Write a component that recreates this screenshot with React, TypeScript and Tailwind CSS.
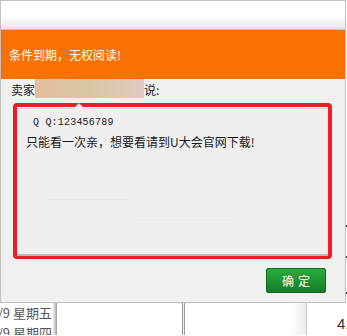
import React from "react";

const cjk = { fontFamily: '"SimSun","Noto Sans CJK SC","Liberation Sans",sans-serif' };

export default function App() {
  return (
    <div className="relative w-[347px] h-[336px] bg-white overflow-hidden" style={cjk}>
      {/* dialog */}
      <div className="w-[346px] border border-[#c0c0c0] bg-[#f0f0f0]">
        <div className="h-[29px] bg-gradient-to-b from-white via-white to-[#e6e6e6] border-b border-[#c4c4c4]" />
        <div className="h-[49px] bg-[#f97100] flex items-center pl-[8px] text-white text-[12px] leading-none">
          条件到期，无权阅读!
        </div>
        <div className="h-[223px] flex flex-col">
          <div className="flex items-end h-[19px] pl-[10px] text-[12px] leading-none text-[#222]">
            <span className="pb-[2px]">卖家</span>
            <span className="w-[109px] h-[19px] bg-gradient-to-r from-[#e6bc9c] via-[#d7c8a2] to-[#e2c8c2] blur-[0.5px]" />
            <span className="pb-[2px]">说:</span>
          </div>
          <div className="ml-[12px] mt-[5px] w-[319px] h-[156px] border-[4px] border-[#ee1c25] rounded-[4px] bg-[#efefef]">
            <div className="relative h-full border-t border-[#d6d6d6] border-b-2 border-b-[#b9b9b9] mt-[1px] pt-[7px] pl-[16px]">
              <svg className="absolute left-[56px] top-[-6px]" width="12" height="7" viewBox="0 0 12 7">
                <path d="M0 6.5 L6 0.5 L12 6.5" fill="#efefef" stroke="#d0d0d0" strokeWidth="1" />
              </svg>
              <div className="text-[10px] leading-[13px] text-[#222] tracking-[0.2px]" style={{ fontFamily: '"Liberation Mono","DejaVu Sans Mono",monospace' }}>
                Q Q:123456789
              </div>
              <div className="mt-[6px] -ml-[7px] text-[12px] leading-[14px] text-[#1a1a1a]">
                只能看一次亲，想要看请到U大会官网下载!
              </div>
              <div className="mt-[50px] ml-[10px] h-[1px] w-[90px] bg-[#eaeaea]" />
              <div className="mt-[20px] ml-[100px] h-[1px] w-[100px] bg-[#eaeaea]" />
            </div>
          </div>
          <div className="flex justify-end pr-[19px] mt-[9px]">
            <button className="w-[60px] h-[25px] rounded-[2px] border border-[#136d1f] bg-gradient-to-b from-[#27ad3c] via-[#1e9431] to-[#167c25] text-white text-[12px] leading-none tracking-[4px] pl-[4px]">
              确定
            </button>
          </div>
        </div>
      </div>
      {/* right tick marks */}
      <div className="absolute left-[346px] top-[225px] w-[1px] h-[2px] bg-[#333]" />
      <div className="absolute left-[346px] top-[256px] w-[1px] h-[2px] bg-[#333]" />
      <div className="absolute left-[346px] top-[292px] w-[1px] h-[2px] bg-[#333]" />
      {/* page behind */}
      <div className="flex h-[32px]">
        <div className="w-[53px] overflow-hidden flex flex-col items-end text-[13px] leading-[20px] text-[#555] pr-[1px]" style={{ fontFamily: '"Noto Sans CJK SC",sans-serif' }}>
          <div className="whitespace-nowrap">/9 星期五</div>
          <div className="whitespace-nowrap">/9 星期四</div>
        </div>
        <div className="w-[4px] bg-gradient-to-r from-[#eeeeee] via-[#cccccc] to-[#999999]" />
        <div className="w-[125px]" />
        <div className="w-[1px] bg-[#999]" />
        <div className="w-[1px] bg-[#eee]" />
        <div className="w-[1px] bg-[#999]" />
        <div className="w-[105px]" />
        <div className="w-[16px] bg-gradient-to-r from-white to-[#ececec]" />
        <div className="w-[1px] bg-[#c8c8c8]" />
        <div className="flex-1 relative">
          <span className="absolute left-[30px] top-[13px] text-[15px] leading-none text-[#333]" style={{ fontFamily: '"Liberation Sans",sans-serif' }}>4.</span>
        </div>
      </div>
    </div>
  );
}
